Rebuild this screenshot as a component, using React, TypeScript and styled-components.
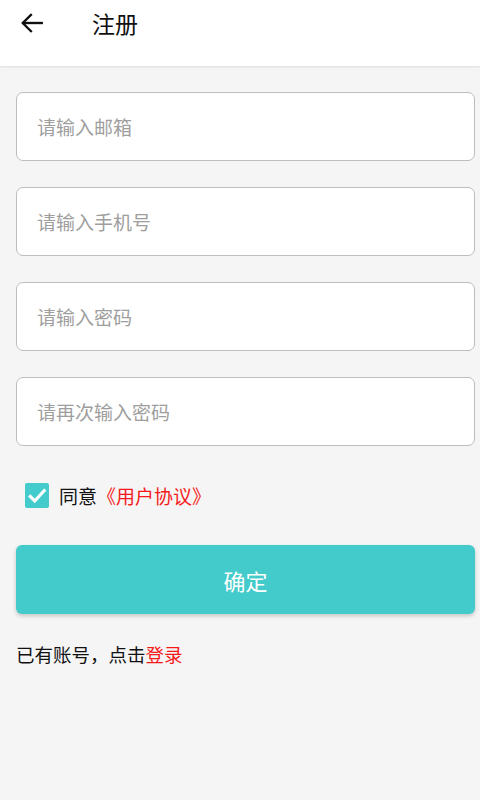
import styled, { createGlobalStyle } from "styled-components"

const GlobalStyle = createGlobalStyle`
    html, body {
        margin: 0;
        padding: 0;
        background: #f5f5f5;
    }
    body {
        font-family: "Noto Sans CJK SC", "Noto Sans", sans-serif;
    }
`

const fields = ["请输入邮箱", "请输入手机号", "请输入密码", "请再次输入密码"]

const App = () => {
    return (
        <Page>
            <GlobalStyle />
            <Header>
                <BackButton aria-label="back">
                    <svg width="26" height="26" viewBox="0 0 24 24" fill="none" stroke="#111" strokeWidth="2.2" strokeLinecap="square">
                        <path d="M21 12H4" />
                        <path d="M11 4.5L3.5 12L11 19.5" />
                    </svg>
                </BackButton>
                <Title>注册</Title>
            </Header>
            <Form>
                {fields.map((f) => (
                    <Input key={f} placeholder={f} type={f.includes("密码") ? "password" : "text"} />
                ))}
                <AgreeRow>
                    <CheckBox>
                        <svg width="22" height="22" viewBox="0 0 24 24" fill="none" stroke="#fff" strokeWidth="3.4">
                            <path d="M3.5 12.5L9.5 18.5L21 6" />
                        </svg>
                    </CheckBox>
                    <span>同意</span>
                    <RedText>《用户协议》</RedText>
                </AgreeRow>
                <SubmitButton type="button">确定</SubmitButton>
                <LoginHint>
                    已有账号，点击<RedText>登录</RedText>
                </LoginHint>
            </Form>
        </Page>
    )
}

export default App;

const Page = styled.div`
    min-height: 800px;
    background: #f5f5f5;
`

const Header = styled.div`
    height: 66px;
    background: #fff;
    display: flex;
    align-items: center;
    padding-bottom: 20px;
    box-sizing: border-box;
    box-shadow: 0 1px 2px rgba(0, 0, 0, 0.1);
`

const BackButton = styled.div`
    width: 26px;
    height: 26px;
    margin-left: 19px;
    display: flex;
`

const Title = styled.div`
    margin-left: 47px;
    font-size: 23px;
    color: #111;
`

const Form = styled.div`
    display: flex;
    flex-direction: column;
    padding: 26px 5px 0 16px;
`

const Input = styled.input`
    height: 69px;
    box-sizing: border-box;
    margin-bottom: 26px;
    border: 1.5px solid #bdbdbd;
    border-radius: 7px;
    background: #fff;
    padding: 0 20px;
    font-family: "Noto Sans CJK SC", "Noto Sans", sans-serif;
    font-size: 19px;
    outline: none;
    &::placeholder {
        color: #9e9e9e;
    }
`

const AgreeRow = styled.div`
    display: flex;
    align-items: center;
    margin: 10px 0 0 9px;
    height: 26px;
    font-size: 19px;
    color: #111;
`

const CheckBox = styled.div`
    width: 24px;
    height: 25px;
    border-radius: 2px;
    background: #44cbcb;
    display: flex;
    align-items: center;
    justify-content: center;
    margin-right: 10px;
`

const RedText = styled.span`
    color: #f41a1a;
`

const SubmitButton = styled.button`
    margin-top: 37px;
    height: 69px;
    border: none;
    border-radius: 6px;
    background: #43caca;
    color: #fff;
    font-family: "Noto Sans CJK SC", "Noto Sans", sans-serif;
    font-size: 22px;
    box-shadow: 0 2px 4px rgba(0, 0, 0, 0.2);
`

const LoginHint = styled.div`
    margin-top: 27px;
    font-size: 18.5px;
    color: #111;
`
